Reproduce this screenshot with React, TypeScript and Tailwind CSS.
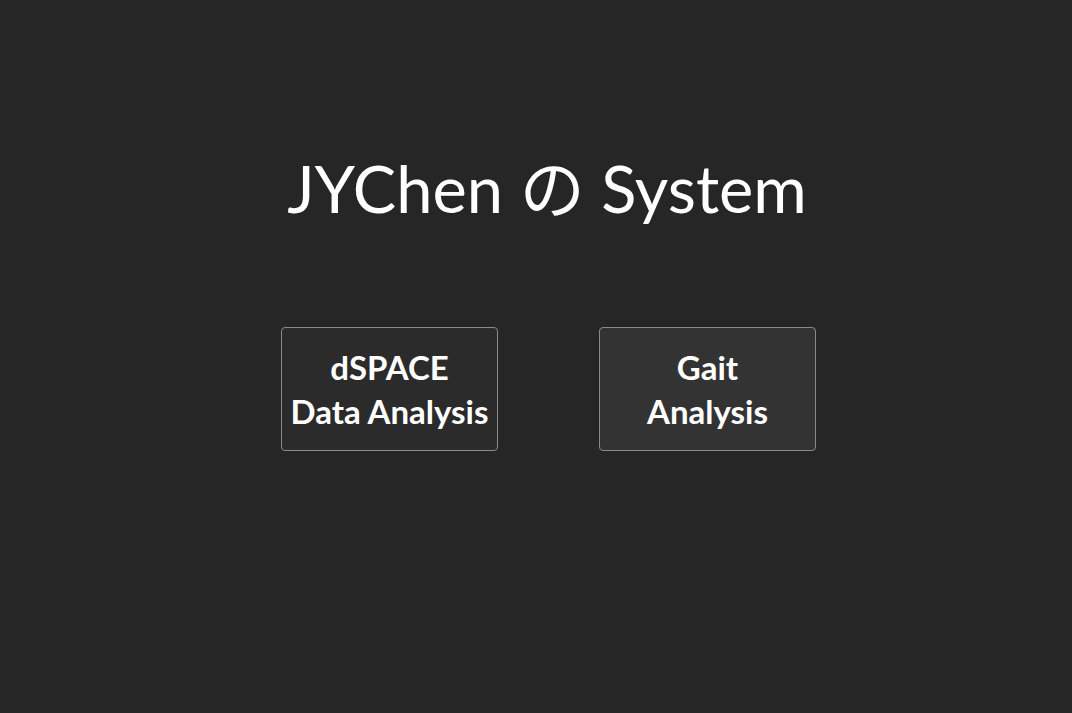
export default function App() {
  return (
    <div className="min-h-screen w-full bg-[#262626] pl-[25px] font-['Lato','Noto_Sans_CJK_JP',sans-serif] text-white">
      <div className="flex flex-col items-center pt-[150px]">
        <h1 className="-ml-[3px] text-[65px] leading-[76px] font-normal">JYChen の System</h1>
        <div className="mt-[101px] flex gap-[101px]">
          <button className="flex h-[124px] w-[217px] flex-col items-center justify-center rounded-[4px] border border-[#8a8a8a] bg-[#2b2b2b] text-[33px] leading-[44px] font-bold">
            <span>dSPACE</span>
            <span>Data Analysis</span>
          </button>
          <button className="flex h-[124px] w-[217px] flex-col items-center justify-center rounded-[4px] border border-[#8a8a8a] bg-[#333333] text-[33px] leading-[44px] font-bold">
            <span>Gait</span>
            <span>Analysis</span>
          </button>
        </div>
      </div>
    </div>
  );
}
